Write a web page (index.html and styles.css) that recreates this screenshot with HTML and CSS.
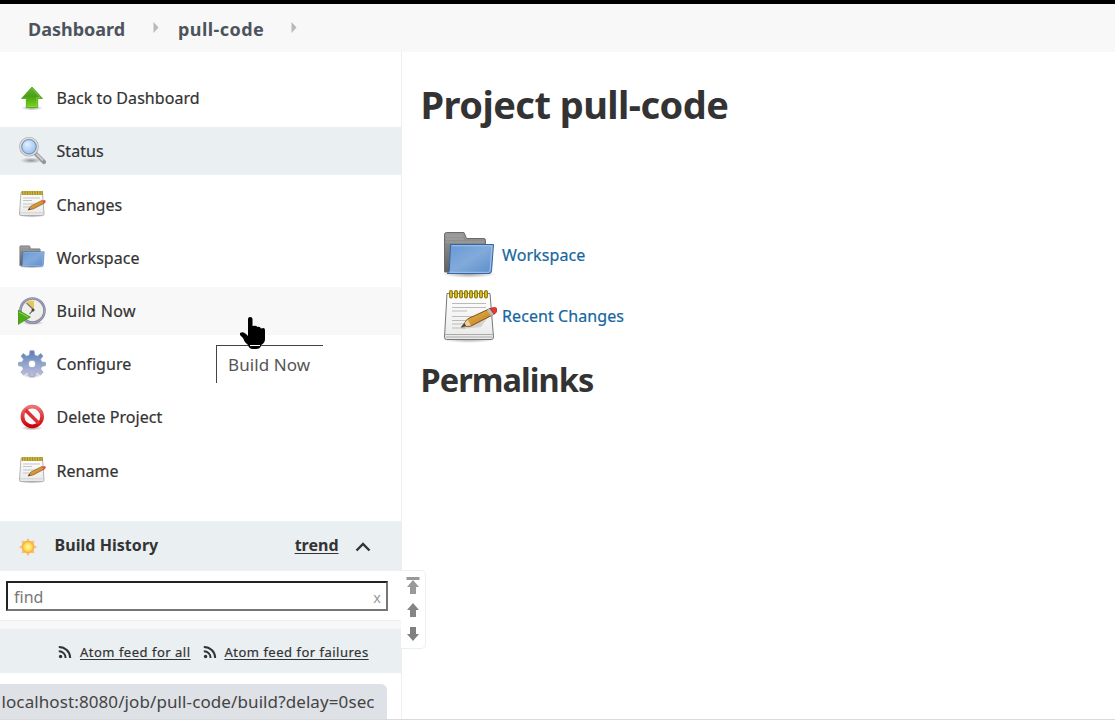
FILE: index.html
```
<!DOCTYPE html>
<html lang="en">
<head>
<meta charset="utf-8">
<title>pull-code</title>
<link rel="stylesheet" href="styles.css">
</head>
<body>
<svg class="defs" width="0" height="0" aria-hidden="true">
  <defs>
    <linearGradient id="green" x1="0" y1="0" x2="0" y2="1"><stop offset="0" stop-color="#5fb82a"/><stop offset=".45" stop-color="#4a9f17"/><stop offset="1" stop-color="#79d814"/></linearGradient>
    <linearGradient id="blue" x1="0" y1="0" x2="1" y2="1"><stop offset="0" stop-color="#6498d2"/><stop offset=".5" stop-color="#82aadb"/><stop offset="1" stop-color="#5b8dc9"/></linearGradient>
    <linearGradient id="gray" x1="0" y1="0" x2="0" y2="1"><stop offset="0" stop-color="#999"/><stop offset="1" stop-color="#606060"/></linearGradient>
    <linearGradient id="gear" x1="0" y1="0" x2="0" y2="1"><stop offset="0" stop-color="#5580b0"/><stop offset=".5" stop-color="#93a3cc"/><stop offset="1" stop-color="#c4bfe3"/></linearGradient>
    <linearGradient id="red" x1="0" y1="0" x2="0" y2="1"><stop offset="0" stop-color="#ec7272"/><stop offset="1" stop-color="#d0000b"/></linearGradient>
    <radialGradient id="lens" cx=".4" cy=".35" r=".7"><stop offset="0" stop-color="#e2effe"/><stop offset="1" stop-color="#8db8ec"/></radialGradient>
    <radialGradient id="sun"><stop offset="0" stop-color="#fff7b0"/><stop offset=".6" stop-color="#ffe05a"/><stop offset="1" stop-color="#fcb83c"/></radialGradient>
    <radialGradient id="shade"><stop offset="0" stop-color="#000" stop-opacity=".38"/><stop offset="1" stop-color="#000" stop-opacity="0"/></radialGradient>
    <linearGradient id="paper" x1="0" y1="0" x2="0" y2="1"><stop offset="0" stop-color="#fff"/><stop offset="1" stop-color="#e9e9e9"/></linearGradient>
    <linearGradient id="wood" x1="0" y1="0" x2="1" y2="1"><stop offset="0" stop-color="#f2bd5c"/><stop offset="1" stop-color="#b77516"/></linearGradient>
    <symbol id="folder" viewBox="0 0 56 50">
      <ellipse cx="28" cy="44" rx="27" ry="4" fill="url(#shade)"/>
      <path d="M3.500 42V4.500Q3.500 2.500 5.500 2.500H23L25.500 8.500H43Q44.500 8.500 44.500 10.500V42Z" fill="url(#gray)" stroke="#6c6c6c"/>
      <path d="M5 6H22M5 9H23M5 12H43" stroke="#aaa" stroke-width=".8"/>
      <path d="M9.500 14.500H52.500L50.500 41Q50.300 43.500 48 43.500H6Q8 42.500 8.300 40Z" fill="url(#blue)" stroke="#3465a4"/>
      <path d="M10.500 15.800H51L49 41Q48.800 42.300 47 42.300H9" fill="none" stroke="#a5c4ea" stroke-width="1"/>
    </symbol>
    <symbol id="notepad" viewBox="0 0 56 56">
      <ellipse cx="28" cy="51" rx="27" ry="4" fill="url(#shade)"/>
      <path d="M6 5.500H49L52.500 49Q52.500 51.500 50 51.500H5.500Q3.500 51.500 3.500 49Z" fill="url(#paper)" stroke="#777"/>
      <path d="M4 46.500H52M5 49H51" stroke="#aaa" stroke-width="1"/>
      <path d="M10 4V8.500M15 4V8.500M20 4V8.500M25 4V8.500M30 4V8.500M35 4V8.500M40 4V8.500M45 4V8.500" stroke="#927b09" stroke-width="4" stroke-linecap="round"/>
      <path d="M10 4V8.500M15 4V8.500M20 4V8.500M25 4V8.500M30 4V8.500M35 4V8.500M40 4V8.500M45 4V8.500" stroke="#e2cb37" stroke-width="1.600" stroke-linecap="round"/>
      <path d="M11 15.500H45M11 19.500H45M11 23H26M11 28.500H45M11 32.500H38M11 36H30M11 40H24" stroke="#bbb" stroke-width="1.200"/>
      <path d="M21 41L40 39L48 28Z" fill="#000" opacity=".12"/>
      <path d="M20.500 39L26.500 31L49 20.500L53.500 26L30 38Z" fill="url(#wood)" stroke="#80520f"/>
      <path d="M20.500 39L26.500 31.500L30 37.500Z" fill="#edcf9c"/><path d="M20 39.500L23.500 35L25 38Z" fill="#444"/>
      <path d="M46 22L49 20.500L53.500 26L50 28Z" fill="#bbb"/>
      <path d="M49 20.500Q56 18 56 21.500Q56 25 53 26Z" fill="#e43838" stroke="#a92525" stroke-width=".7"/>
    </symbol>
    <symbol id="notepad-small" viewBox="0 0 28 28">
      <ellipse cx="14" cy="25.500" rx="13" ry="2.200" fill="url(#shade)"/>
      <path d="M3 2.500H24.500L26 24Q26 25.500 24.500 25.500H3Q1.500 25.500 1.500 24Z" fill="url(#paper)" stroke="#aaa" stroke-width=".9"/>
      <path d="M2 22.800H26" stroke="#ccc" stroke-width=".8"/>
      <path d="M3.500 3H25" stroke="#c9b341" stroke-width="4"/>
      <path d="M4.500 1V5M7 1V5M9.500 1V5M12 1V5M14.500 1V5M17 1V5M19.500 1V5M22 1V5M24.200 1V5" stroke="#9b8527" stroke-width=".8"/>
      <path d="M5 8H22M5 10.500H14M5 14H21M5 17H13" stroke="#c5c5c5"/>
      <path d="M10 20L13 16L24 10.500L26.500 13L15.500 18.800Z" fill="url(#wood)" stroke="#94651f" stroke-width=".8"/>
      <path d="M10 20L11.500 17.800L12.500 19.500Z" fill="#444"/>
      <path d="M24 10.500Q28 9 27.700 11.500Q27.500 13 26 13.500Z" fill="#e45148"/>
    </symbol>
    <symbol id="rss" viewBox="0 0 14 14">
      <circle cx="2.600" cy="11.500" r="1.700" fill="#333"/>
      <path d="M.8 6.200A6.600 6.600 0 0 1 7.600 12.900M.8 1.900A11.200 11.200 0 0 1 12.200 12.900" fill="none" stroke="#333" stroke-width="2"/>
    </symbol>
  </defs>
</svg>
<nav class="crumbs">
  <a class="crumb-home">Dashboard</a>
  <svg class="sep" width="6" height="11" viewBox="0 0 6 11"><path d="M.5 0L5.500 5.500L.5 11Z" fill="#b9b9b9"/></svg>
  <a class="crumb-job">pull-code</a>
  <svg class="sep" width="6" height="11" viewBox="0 0 6 11"><path d="M.5 0L5.500 5.500L.5 11Z" fill="#b9b9b9"/></svg>
</nav>
<div class="page">
  <aside class="side">
    <ul class="tasks">
      <li class="task"><svg class="icon" viewBox="0 0 28 28"><ellipse cx="14" cy="24" rx="11" ry="2.500" fill="url(#shade)"/><path d="M14 3L24.500 14.500H19.700V23.500H8.300V14.500H3.500Z" fill="url(#green)" stroke="#50a51c" stroke-width=".8"/><path d="M14 4.500L22 13.500H18.700V22.500H9.300" fill="none" stroke="#8bd55b" stroke-width=".6"/></svg><a class="t-back">Back to Dashboard</a></li>
      <li class="task active"><svg class="icon" viewBox="0 0 28 28"><ellipse cx="13" cy="23.500" rx="11" ry="3" fill="url(#shade)"/><path d="M18 17L26 25" stroke="#959595" stroke-width="4.200" stroke-linecap="round"/><path d="M18.500 17L25 23.500" stroke="#ccc" stroke-width="2"/><circle cx="11" cy="9.800" r="8.500" fill="url(#lens)" stroke="#aaa" stroke-width="2.600"/><circle cx="11" cy="9.800" r="8.500" fill="none" stroke="#ddd" stroke-width="1.400"/><circle cx="11" cy="9.800" r="7.100" fill="none" stroke="#6f94cc" stroke-width="1"/></svg><a class="t-status">Status</a></li>
      <li class="task"><svg class="icon"><use href="#notepad-small"/></svg><a class="t-changes">Changes</a></li>
      <li class="task"><svg class="icon"><use href="#folder"/></svg><a class="t-work">Workspace</a></li>
      <li class="task hover"><svg class="icon" viewBox="0 0 28 28"><ellipse cx="15" cy="26" rx="11" ry="2" fill="url(#shade)"/><circle cx="14.500" cy="13.500" r="12" fill="#efefeb" stroke="#85859f" stroke-width="2.600"/><circle cx="14.500" cy="13.500" r="12.200" fill="none" stroke="#a5a5c4" stroke-width="1"/><path d="M14.500 13L8.500 5Q12 2.500 16 4V11Z" fill="#e9c754"/><path d="M8.500 6L15.500 12.500L11.500 17" fill="none" stroke="#777" stroke-width="1.200"/><circle cx="15" cy="13" r="1.500" fill="#444"/><path d="M0 13L12.500 20L0 27.500Z" fill="#4dac16" stroke="#378a0b" stroke-width=".6"/><path d="M1 15L10 20" stroke="#8cdb55"/></svg><a class="t-build">Build Now</a></li>
      <li class="task"><svg class="icon" viewBox="0 0 28 28"><ellipse cx="14" cy="25" rx="10" ry="3" fill="url(#shade)"/><path fill-rule="evenodd" d="M12 .8H16L16.600 5L19.500 6.200L22.700 3.500L25 6L22.500 9.200L23.500 12L27.500 12.500V15.500L23.500 16.400L22.500 19L25 22.200L22.500 24.800L19.400 22.300L16.600 23.500L16 27H12L11.400 23.500L8.700 22.300L5.500 24.800L3 22.200L5.500 19L4.400 16.400L.5 15.500V12.500L4.400 12L5.500 9.200L3 6L5.500 3.500L8.600 6.200L11.400 5ZM14 10.200A3.800 3.800 0 1 0 14 17.800A3.800 3.800 0 1 0 14 10.200Z" fill="url(#gear)" stroke="#8d9fc4" stroke-width=".8"/></svg><a class="t-config">Configure</a></li>
      <li class="task"><svg class="icon" viewBox="0 0 28 28"><ellipse cx="14" cy="25" rx="11" ry="2.500" fill="url(#shade)"/><circle cx="14.300" cy="13.500" r="9.800" fill="#fafafa" stroke="url(#red)" stroke-width="3.800"/><path d="M7.500 7L21 20.500" stroke="#dc3038" stroke-width="3.600"/></svg><a class="t-delete">Delete Project</a></li>
      <li class="task"><svg class="icon"><use href="#notepad-small"/></svg><a class="t-rename">Rename</a></li>
    </ul>
    <section class="history">
      <header class="history-head">
        <svg class="sun" width="18" height="18" viewBox="0 0 18 18"><path d="M9 0L11 3.300L15.300 2.700L14.700 6.900L18 9L14.700 11.100L15.300 15.300L11 14.700L9 18L7 14.700L2.700 15.300L3.300 11.100L0 9L3.300 6.900L2.700 2.700L7 3.300Z" fill="#f9bd6d"/><circle cx="9" cy="9" r="5.600" fill="url(#sun)" stroke="#efaa40" stroke-width=".7"/></svg>
        <span class="title">Build History</span>
        <a class="trend">trend</a>
        <svg class="chev" width="16" height="10" viewBox="0 0 16 10"><path d="M1.500 8.500L8 2L14.500 8.500" fill="none" stroke="#333" stroke-width="2.400"/></svg>
      </header>
      <div class="search"><div class="field"><span class="hint">find</span><span class="clear">x</span></div></div>
      <div class="strip"></div>
      <footer class="feeds">
        <svg width="14" height="14"><use href="#rss"/></svg><a class="feed-all">Atom feed for all</a>
        <svg class="second" width="14" height="14"><use href="#rss"/></svg><a class="feed-fail">Atom feed for failures</a>
      </footer>
    </section>
    <div class="pager">
      <svg width="14" height="18" viewBox="0 0 14 18"><path d="M.5 0H13.500V3H.5Z M7 3L13 10H10V17H4V10H1Z" fill="#999"/></svg>
      <svg width="14" height="14" viewBox="0 0 14 14"><path d="M7 0L13 7H10V14H4V7H1Z" fill="#858585"/></svg>
      <svg width="14" height="14" viewBox="0 0 14 14"><path d="M7 14L13 7H10V0H4V7H1Z" fill="#808080"/></svg>
    </div>
  </aside>
  <main class="main">
    <h1>Project pull-code</h1>
    <div class="links">
      <a class="link"><svg width="56" height="50"><use href="#folder"/></svg><span class="l-work">Workspace</span></a>
      <a class="link"><svg width="56" height="56"><use href="#notepad"/></svg><span class="l-recent">Recent Changes</span></a>
    </div>
    <h2>Permalinks</h2>
  </main>
</div>
<div class="status-url"><span>localhost:8080/job/pull-code/build?delay=0sec</span></div>
<div class="tooltip"><span>Build Now</span></div>
<svg class="cursor" width="26" height="33" viewBox="0 0 26 33"><path d="M8 2Q8 0 10 0Q12.500 0 12.500 2V9Q16 8 17.500 10Q20 9 21 11.500Q25 10 25 13V22Q25 26 21 28V29Q20 32 16 32H13Q9 32 8 28Q4 25 3 21L0 18V16Q3 14 6 17L8 19Z" fill="#000"/><path d="M10 28.500H20" stroke="#fff" stroke-width="1"/></svg>
</body>
</html>
```
FILE: styles.css
```
* { box-sizing: border-box; }
body { margin: 0; height: 727px; overflow: hidden; background: #fff; color: #333; font-family: "Noto Sans", "Open Sans", sans-serif; font-size: 16px; border-top: 4px solid #000; }
a, span { white-space: nowrap; }
.defs { position: absolute; }
.crumbs { height: 48px; background: #f8f8f8; display: flex; align-items: center; padding: 0 0 0 28px; color: #4d545d; font-weight: 700; font-size: 18px; }
.crumbs a { display: block; line-height: 24px; margin-top: 2px; }
.crumbs .sep { margin-top: -2px; }
.crumb-home { width: 125px; }
.crumb-job { width: 91px; margin-left: 19px; letter-spacing: .45px; }
.crumbs .crumb-job + .sep { margin-left: 22px; }
.page { display: flex; height: 668px; border-bottom: 1px solid #d9dadc; }
.side { position: relative; width: 402px; border-right: 1px solid #eaeff2; padding-top: 21.500px; }
.tasks { list-style: none; margin: 0; padding: 0; display: grid; gap: 5px; }
.task { height: 48.250px; display: flex; align-items: center; padding-left: 18px; gap: 10.500px; -webkit-text-stroke: .2px; }
.task a { line-height: 24px; padding-top: 1px; letter-spacing: .06px; }
.task:nth-child(1) a, .task:nth-child(6) a, .task:nth-child(7) a { padding-top: 0; }
.task .t-build { letter-spacing: .3px; }
.icon { width: 28px; height: 28px; flex: none; }
.active { background: #eaeff2; }
.hover { background: #f8f8f8; }
.history { margin-top: 26.500px; }
.history-head { height: 50px; background: #eaeff2; display: flex; align-items: center; padding: 0 31px 3px 18px; font-weight: 700; font-size: 16px; }
.sun { margin: 4px 0 0 .5px; }
.title { margin-left: 18px; letter-spacing: .05px; }
.trend { margin-left: auto; text-decoration: underline; text-underline-offset: 2px; }
.chev { margin: 4px -.5px 0 16px; }
.search { height: 50px; padding: 10px 13px 10px 6px; border-bottom: 1px solid #eaeff2; }
.field { height: 30px; border: 2px solid; border-color: #222 #767676 #767676 #222; display: flex; justify-content: space-between; align-items: center; padding: 1px 5px 0 6px; color: #777; }
.clear { color: #999; font-size: 14.500px; }
.strip { height: 8px; background: #f8f8f8; }
.feeds { height: 44px; background: #eaeff2; display: flex; align-items: center; padding: 2px 0 0 58px; font-size: 13px; letter-spacing: .5px; -webkit-text-stroke: .2px; }
.feeds a { margin-left: 8px; text-decoration: underline; text-underline-offset: 2px; }
.feeds .second { margin-left: 12px; }
.pager { position: absolute; left: 401px; top: 518px; width: 25px; height: 79px; border: 1px solid #eaeff2; border-left: 0; border-radius: 0 5px 5px 0; background: #fff; padding: 6px 0 0 4.500px; display: flex; flex-direction: column; gap: 8px; }
.pager svg:last-child { margin-top: 2px; }
.main { padding: 27px 0 0 18.500px; }
h1, h2 { margin: 0; font-weight: 700; white-space: nowrap; }
h1 { font-size: 38px; line-height: 50px; letter-spacing: -.55px; }
.links { margin: 98px 0 0 20px; display: grid; }
.link { display: flex; align-items: center; color: #1566a0; gap: 5.500px; -webkit-text-stroke: .2px; letter-spacing: .08px; }
.link:first-child { height: 56px; }
.link:last-child { height: 66px; }
h2 { font-size: 32.500px; line-height: 44px; margin-top: 9px; letter-spacing: -.95px; }
.status-url { position: absolute; left: 0; top: 684px; width: 387px; height: 35px; background: #dee1e6; border-radius: 0 6px 0 0; color: #444; font-size: 17px; line-height: 35px; padding-left: 1.500px; letter-spacing: .1px; }
.tooltip { position: absolute; left: 216px; top: 345px; width: 107px; height: 38px; border: solid #444; border-width: 1px 0 0 1px; background: #fff; color: #555; line-height: 37px; padding-left: 11px; font-size: 17px; letter-spacing: .1px; }
.cursor { position: absolute; left: 240px; top: 317px; }
```
